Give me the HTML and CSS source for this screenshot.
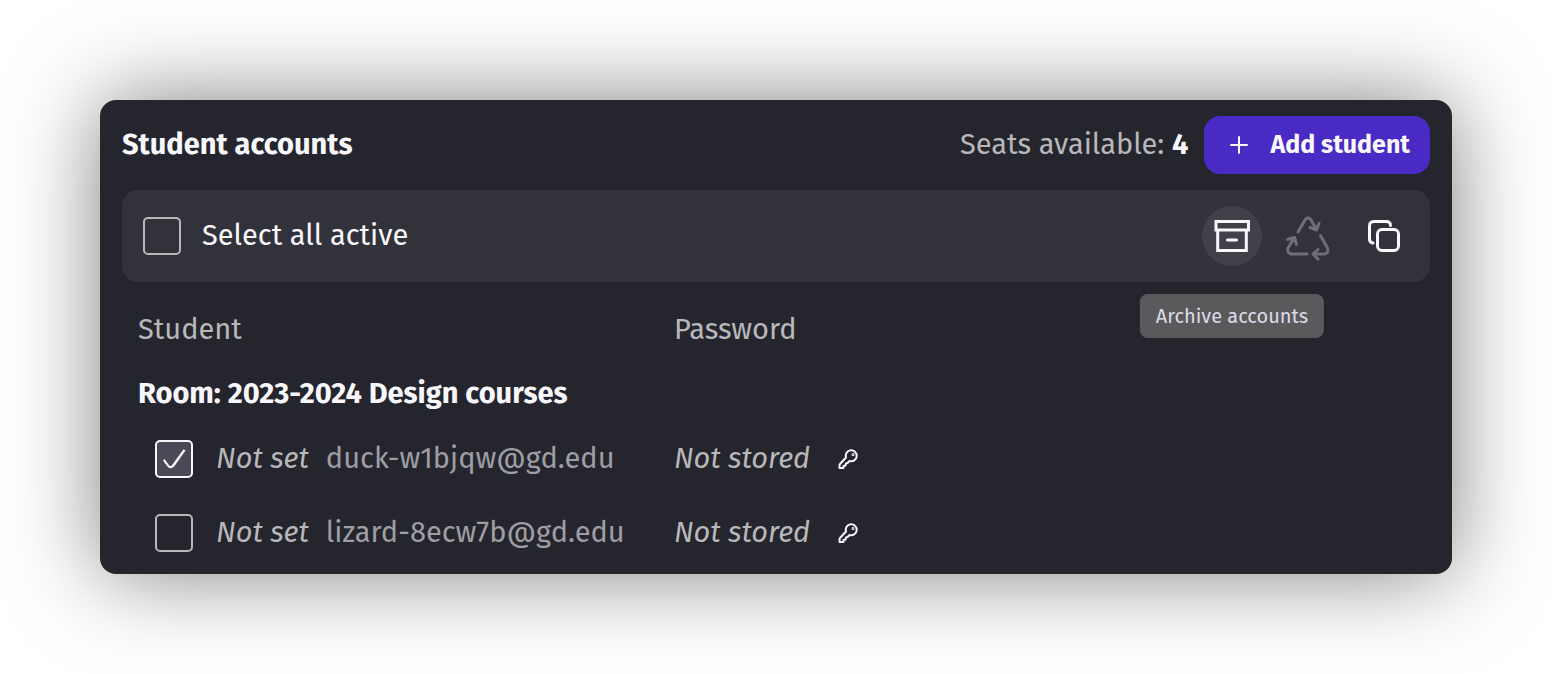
FILE: index.html
```html
<!DOCTYPE html>
<html lang="en">
<head>
<meta charset="utf-8">
<title>Student accounts</title>
<link rel="stylesheet" href="styles.css">
</head>
<body>
<main class="card">
  <header class="header">
    <h1 class="title">Student accounts</h1>
    <p class="seats">Seats available: <strong class="seats-count">4</strong></p>
    <button class="add" type="button">
      <svg class="add-icon" viewBox="0 0 20 20" aria-hidden="true"><path d="M10 2v16M2 10h16"/></svg>
      Add student
    </button>
  </header>

  <section class="toolbar">
    <label class="select-all"><input class="check" type="checkbox">Select all active</label>
    <div class="tool">
      <button class="icon-button active" type="button" aria-labelledby="archive-tip">
        <svg class="icon" viewBox="0 0 60 60" aria-hidden="true"><g class="stroke square"><path d="M14 15.5h32.500v8.500H14zM15.700 24h28.600v20.500H15.700z"/><path d="M25.500 34h9"/></g></svg>
      </button>
      <span class="tooltip" id="archive-tip" role="tooltip">Archive accounts</span>
    </div>
    <button class="icon-button dim" type="button" aria-label="Restore accounts">
      <svg class="icon" viewBox="0 0 60 60" aria-hidden="true"><g class="stroke"><path d="M20 26L27 14q3-4.500 6 0L38.500 23.500M32 21.500l6.500 2.500L41 17.500"/><path d="M42.500 29.500l7 12.500q1.500 5.500-3.500 6H35.500M40 43.500l-5 4.500 5 5"/><path d="M29 48H13.500q-5-.8-3.500-6L16.500 31.500M9.500 33.500l7-2 2 7"/></g></svg>
    </button>
    <button class="icon-button" type="button" aria-label="Copy accounts">
      <svg class="icon" viewBox="0 0 60 60" aria-hidden="true"><g class="stroke"><rect x="23.500" y="23.500" width="21" height="21" rx="4.500"/><path d="M36.500 19.500q0-4-4.500-4H20q-4.500 0-4.500 4.500v13q0 3.500 3.500 4"/></g></svg>
    </button>
  </section>

  <table class="students">
    <thead>
      <tr class="head-row"><th class="col-student" scope="col">Student</th><th scope="col">Password</th></tr>
    </thead>
    <tbody>
      <tr class="room-row"><th colspan="2" scope="colgroup">Room: 2023-2024 Design courses</th></tr>
      <tr class="row">
        <td><label class="student"><input class="check" type="checkbox" checked><em class="name">Not set</em><span class="email">duck-w1bjqw@gd.edu</span></label></td>
        <td><div class="password"><em>Not stored</em>
          <button class="key" type="button" aria-label="Change password"><svg class="key-icon" viewBox="0 0 24 24" aria-hidden="true"><path d="M12.500 14a5.500 5.500 0 1 0-3.500-3.500L3 17Q2.500 17.500 2.500 18.500v2.500H6.500V19L8.500 18.500 9 16.500 10.500 16z"/><circle cx="16" cy="7.500" r=".5"/></svg></button></div></td>
      </tr>
      <tr class="row">
        <td><label class="student"><input class="check" type="checkbox"><em class="name">Not set</em><span class="email">lizard-8ecw7b@gd.edu</span></label></td>
        <td><div class="password"><em>Not stored</em>
          <button class="key" type="button" aria-label="Change password"><svg class="key-icon" viewBox="0 0 24 24" aria-hidden="true"><path d="M12.500 14a5.500 5.500 0 1 0-3.500-3.500L3 17Q2.500 17.500 2.500 18.500v2.500H6.500V19L8.500 18.500 9 16.500 10.500 16z"/><circle cx="16" cy="7.500" r=".5"/></svg></button></div></td>
      </tr>
    </tbody>
  </table>
</main>
</body>
</html>
```
FILE: styles.css
```css
* { box-sizing: border-box; }

body {
  margin: 0;
  padding: 100px;
  background: #fff;
  color: #f8f8fc;
  font: 400 29px/36px "Fira Sans", "Noto Sans", sans-serif;
}

button {
  margin: 0;
  padding: 0;
  border: 0;
  background: none;
  color: inherit;
  font: inherit;
}

.card {
  padding: 16px 22px 4px;
  border-radius: 16px;
  background: #25252e;
  box-shadow: 0 0 90px rgba(0, 0, 0, 0.5);
}

.header {
  display: flex;
  align-items: center;
  gap: 16px;
  margin-bottom: 16px;
}

.title {
  flex: 1;
  margin: 0;
  font-size: 29px;
  font-weight: 700;
}

.seats { margin: 0; color: #b8b8ba; }
.seats-count { color: #f8f8fc; font-weight: 700; }

.add {
  display: flex;
  align-items: center;
  gap: 21px;
  height: 58px;
  padding: 0 20px 0 25px;
  border-radius: 16px;
  background: #492ac4;
  font-size: 25px;
  font-weight: 700;
}

.add-icon {
  width: 20px;
  height: 20px;
  fill: none;
  stroke: currentColor;
  stroke-width: 2;
  stroke-linecap: round;
}

.toolbar {
  display: flex;
  align-items: center;
  gap: 16px;
  padding: 16px 16px 16px 21px;
  border-radius: 16px;
  background: #32323b;
}

.select-all {
  display: flex;
  flex: 1;
  align-items: center;
  gap: 21px;
}

.check {
  display: grid;
  flex: none;
  place-items: center;
  width: 38px;
  height: 38px;
  margin: 0;
  border: 2px solid #b8b8ba;
  border-radius: 5px;
  appearance: none;
}

.check:checked {
  border-color: #f8f8fc;
  background: #4c4957;
}

.check:checked::before {
  content: "";
  width: 24px;
  height: 22px;
  background: #f8f8fc;
  clip-path: path("M1 12.500L2.500 11L6.500 16.500Q8.500 19.500 10.500 16.500L21.500 1.200L23.500 2.500L12.500 18Q8.500 22.500 5 18Z");
}

.tool { position: relative; }

.icon-button {
  display: block;
  width: 60px;
  height: 60px;
  border-radius: 50%;
}

.active { background: #41414a; }
.dim { color: #6f6f75; }
.icon { display: block; }

.stroke {
  fill: none;
  stroke: currentColor;
  stroke-width: 3;
  stroke-linecap: round;
  stroke-linejoin: round;
}

.square { stroke-linejoin: miter; }

.tooltip {
  position: absolute;
  top: 88px;
  left: 50%;
  padding: 8px 16px;
  border-radius: 8px;
  background: #5a5a5c;
  color: #dcdce6;
  font-size: 20px;
  line-height: 28px;
  white-space: nowrap;
  transform: translateX(-50%);
}

.students {
  width: 100%;
  margin-top: 16px;
  padding: 0 16px;
  border-spacing: 0;
  table-layout: fixed;
}

.students th,
.students td {
  padding: 0;
  text-align: left;
  vertical-align: middle;
}

.col-student { width: 42%; }
.head-row { height: 64px; color: #b8b8ba; }
.head-row th { font-weight: 400; }
.room-row { height: 60px; }
.students .room-row th { padding-top: 4px; font-weight: 700; }
.row { height: 74px; color: #b8b8ba; }

.student,
.password {
  display: flex;
  align-items: center;
}

.student { padding-left: 17px; }
.name { margin: 0 17px 0 23px; }
.email { color: #9e9ea3; }
.password { gap: 27px; }

.key-icon {
  display: block;
  width: 24px;
  height: 24px;
  fill: none;
  stroke: #f8f8fc;
  stroke-width: 2;
  stroke-linejoin: round;
}
```
